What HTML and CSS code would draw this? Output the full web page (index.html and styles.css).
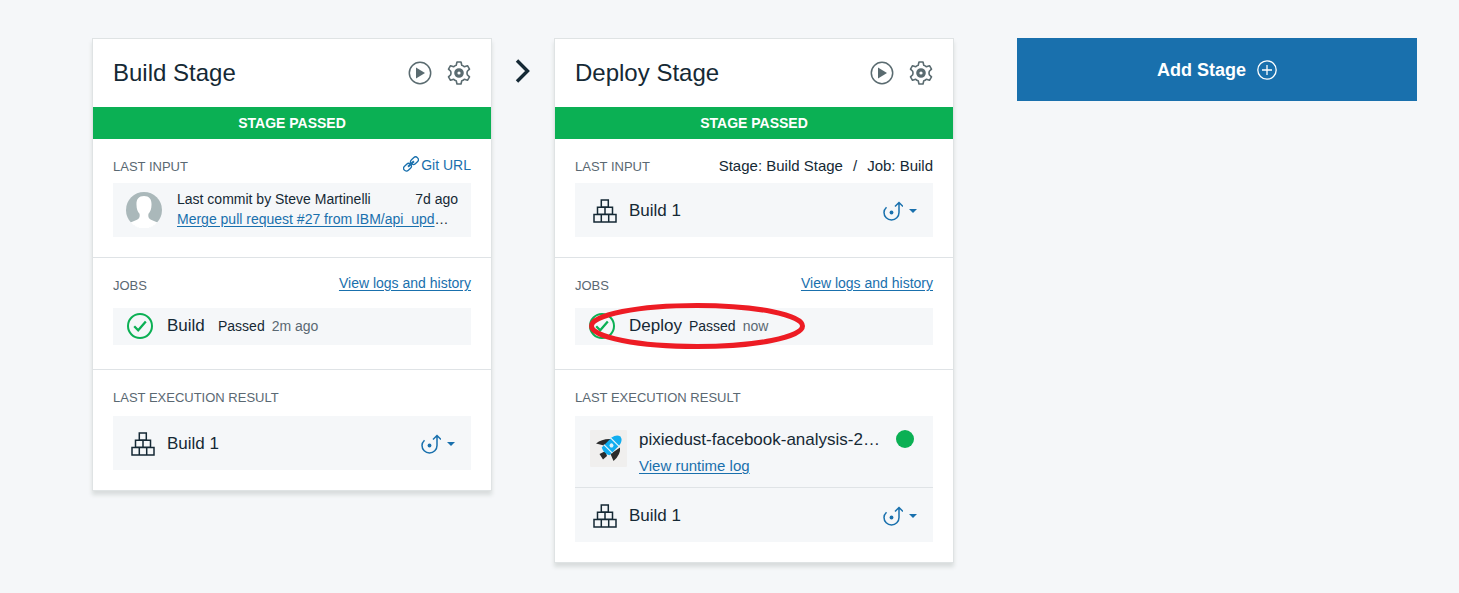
FILE: index.html
```html
<!DOCTYPE html>
<html lang="en">
<head>
<meta charset="utf-8">
<title>Delivery Pipeline</title>
<link rel="stylesheet" href="styles.css">
</head>
<body>
<svg class="sprite" aria-hidden="true">
  <symbol id="play" viewBox="0 0 24 24">
    <circle cx="12" cy="12" r="10.7" fill="none" stroke="currentColor" stroke-width="1.5"/>
    <path d="M8 6.5v11l9-5.5z" fill="currentColor"/>
  </symbol>
  <symbol id="gear" viewBox="0 0 24 24">
    <path d="M10 1h4l.8 3.200q1.500.3 2.500 1.600l3.200-1.100 2 3.400-2.200 2.200q-.6 1.700 0 3.400l2.200 2.200-2 3.400-3.200-1.100q-1 1.300-2.500 1.600L14 23h-4l-.8-3.200q-1.500-.3-2.500-1.600l-3.200 1.100-2-3.400 2.200-2.200q.6-1.700 0-3.400L1.500 8.100l2-3.400 3.200 1.100q1-1.300 2.500-1.600z" fill="none" stroke="currentColor" stroke-width="1.600" stroke-linejoin="round"/>
    <circle cx="12" cy="12" r="3.200" fill="none" stroke="currentColor" stroke-width="3.200"/>
  </symbol>
  <symbol id="blocks" viewBox="0 0 24 24">
    <path d="M8.300 1h7v7h-7zM4.500 8.300h7.500v7h-7.500zM12 8.300h7.500v7H12zM1 15.600h7.300V23H1zM8.300 15.600h7.400V23H8.300zM15.700 15.600H23V23h-7.300z" fill="none" stroke="currentColor" stroke-width="1.500"/>
  </symbol>
  <symbol id="redeploy" viewBox="0 0 20 20">
    <path d="M3.500 6.200C1.600 8 1 9.500 1 11.500a7.500 7.500 0 0 0 15 0V2M12 5.500l4-4 4 4" fill="none" stroke="currentColor" stroke-width="1.500"/>
    <circle cx="8.500" cy="11.500" r="1.900" fill="currentColor"/>
  </symbol>
  <symbol id="check" viewBox="0 0 26 26">
    <circle cx="13" cy="13" r="12" fill="none" stroke="currentColor" stroke-width="2"/>
    <path d="M7.200 13.200l4 4 7.600-8.700" fill="none" stroke="currentColor" stroke-width="2.300"/>
  </symbol>
  <symbol id="caret" viewBox="0 0 8 4"><path d="M0 0h8L4 4z" fill="currentColor"/></symbol>
</svg>

<main class="pipeline">
  <section class="stage">
    <header class="stage-header">
      <h2 class="stage-title">Build Stage</h2>
      <button class="icon-button" type="button" aria-label="Run stage"><svg class="icon-24"><use href="#play"/></svg></button>
      <button class="icon-button" type="button" aria-label="Configure stage"><svg class="icon-24"><use href="#gear"/></svg></button>
    </header>
    <p class="status">STAGE PASSED</p>
    <div class="section">
      <div class="section-head">
        <h3 class="label">LAST INPUT</h3>
        <a class="git-link" href="#git"><svg class="icon-link" viewBox="0 0 16 16"><g fill="none" stroke="currentColor" stroke-width="1.300" transform="rotate(-43 8 8)"><rect x="-1" y="5.200" width="8.500" height="5.600" rx="2.800"/><rect x="8.500" y="5.200" width="8.500" height="5.600" rx="2.800"/><path d="M4 8h8" stroke-width="2"/></g></svg>Git URL</a>
      </div>
      <div class="row commit">
        <svg class="avatar" viewBox="0 0 36 36"><circle cx="18" cy="18" r="18" fill="#aab8ba"/><path d="M18 4c-5.500 0-7.800 3.500-7.500 9 .1 4 1 6.500 3 8.700.6 3.300-.2 5-2.500 6L4.500 30.500A18 18 0 0 0 31.500 30.500L25 27.700c-2.300-1-3.100-2.700-2.500-6 2-2.200 2.900-4.700 3-8.700C25.800 7.500 23.500 4 18 4z" fill="#fff"/></svg>
        <div class="commit-text">
          <div class="commit-line"><span>Last commit by Steve Martinelli</span><span>7d ago</span></div>
          <div class="clip"><a class="link" href="#commit">Merge pull request #27 from IBM/api_upd</a>…</div>
        </div>
      </div>
    </div>
    <div class="section jobs">
      <div class="section-head">
        <h3 class="label">JOBS</h3>
        <a class="link logs" href="#logs">View logs and history</a>
      </div>
      <div class="row job">
        <svg class="icon-check"><use href="#check"/></svg>
        <div class="job-text"><span class="job-name">Build</span><span>Passed</span><span class="muted">2m ago</span></div>
      </div>
    </div>
    <div class="section result">
      <div class="section-head"><h3 class="label">LAST EXECUTION RESULT</h3></div>
      <div class="row build">
        <svg class="icon-24"><use href="#blocks"/></svg><span class="name">Build 1</span>
        <button class="menu-button" type="button" aria-label="Send to next stage"><svg class="icon-20"><use href="#redeploy"/></svg><svg class="caret"><use href="#caret"/></svg></button>
      </div>
    </div>
  </section>

  <svg class="arrow" viewBox="0 0 16 24" aria-hidden="true"><path d="M2 1.500L12.500 12 2 22.500" fill="none" stroke="currentColor" stroke-width="3.400"/></svg>

  <section class="stage">
    <header class="stage-header">
      <h2 class="stage-title">Deploy Stage</h2>
      <button class="icon-button" type="button" aria-label="Run stage"><svg class="icon-24"><use href="#play"/></svg></button>
      <button class="icon-button" type="button" aria-label="Configure stage"><svg class="icon-24"><use href="#gear"/></svg></button>
    </header>
    <p class="status">STAGE PASSED</p>
    <div class="section">
      <div class="section-head">
        <h3 class="label">LAST INPUT</h3>
        <div class="source"><span>Stage: Build Stage</span><span>/</span><span>Job: Build</span></div>
      </div>
      <div class="row build">
        <svg class="icon-24"><use href="#blocks"/></svg><span class="name">Build 1</span>
        <button class="menu-button" type="button" aria-label="Send to next stage"><svg class="icon-20"><use href="#redeploy"/></svg><svg class="caret"><use href="#caret"/></svg></button>
      </div>
    </div>
    <div class="section jobs">
      <div class="section-head">
        <h3 class="label">JOBS</h3>
        <a class="link logs" href="#logs">View logs and history</a>
      </div>
      <div class="row job">
        <svg class="icon-check"><use href="#check"/></svg>
        <div class="job-text"><span class="job-name">Deploy</span><span>Passed</span><span class="muted">now</span></div>
        <svg class="highlight" viewBox="0 0 216 46" aria-hidden="true"><ellipse cx="108" cy="23" rx="105.500" ry="20.500" fill="none" stroke="#ed1c24" stroke-width="5"/></svg>
      </div>
    </div>
    <div class="section result">
      <div class="section-head"><h3 class="label">LAST EXECUTION RESULT</h3></div>
      <div class="row app">
        <svg class="app-icon" viewBox="0 0 37 37">
          <rect width="37" height="37" rx="1" fill="#f0efee"/>
          <path d="M6 13.500q6-5 15-4.500l-5 7zM9.500 24l6-3 1.500 5-4 3.500zM30 17.500q1 7-6.500 13.500L20.500 24z" fill="#2b2b2b"/>
          <g transform="rotate(-45 22 15)"><path d="M13 9.500h14q6 1 7 5.500-1 4.500-7 5.500H13q-3-5.500 0-11z" fill="#10adef"/><path d="M16.500 9v12M26 9v12" stroke="#e9f6fb" stroke-width="1.200"/><circle cx="21.300" cy="15" r="2" fill="#d9f1fb"/></g>
        </svg>
        <div class="app-text"><span class="name">pixiedust-facebook-analysis-2…</span><a class="link runtime" href="#runtime">View runtime log</a></div>
        <span class="dot" role="img" aria-label="Running"></span>
      </div>
      <div class="row build">
        <svg class="icon-24"><use href="#blocks"/></svg><span class="name">Build 1</span>
        <button class="menu-button" type="button" aria-label="Send to next stage"><svg class="icon-20"><use href="#redeploy"/></svg><svg class="caret"><use href="#caret"/></svg></button>
      </div>
    </div>
  </section>

  <button class="add-stage" type="button">Add Stage<svg class="icon-20" viewBox="0 0 20 20"><circle cx="10" cy="10" r="9.200" fill="none" stroke="currentColor" stroke-width="1.300"/><path d="M10 5v10M5 10h10" stroke="currentColor" stroke-width="1.300"/></svg></button>
</main>
</body>
</html>
```
FILE: styles.css
```css
* { box-sizing: border-box; }

body {
  margin: 0;
  background: #f5f7f9;
  color: #152935;
  font: 14px/20px "Liberation Sans", Arial, sans-serif;
}

h2, h3, p { margin: 0; font-weight: 400; }
svg { display: block; flex: none; }
button { border: 0; padding: 0; background: none; font: inherit; color: inherit; cursor: pointer; }
.sprite { position: absolute; width: 0; height: 0; }

.pipeline {
  display: grid;
  grid-template-columns: minmax(0, 1fr) 62px minmax(0, 1fr) 63px minmax(0, 1fr);
  align-items: start;
  padding: 38px 42px 24px 92px;
}

.stage {
  background: #fff;
  border: 1px solid #dfe3e4;
  box-shadow: 0 4px 4px #d9dddd;
}
.stage-header { display: flex; align-items: center; gap: 15px; height: 68px; padding: 0 20px; }
.stage-title { flex: 1; font-size: 24px; line-height: 32px; }
.icon-button { color: #5a6b70; }
.icon-24 { width: 24px; height: 24px; }
.icon-20 { width: 20px; height: 20px; }

.status {
  background: #0bb054;
  color: #fff;
  font-weight: 700;
  line-height: 32px;
  text-align: center;
}

.section { padding: 17px 20px 20px; }
.section + .section { border-top: 1px solid #dfe3e6; }
.section-head { display: flex; justify-content: space-between; height: 22px; margin-bottom: 5px; }
.jobs { padding-bottom: 24px; }
.jobs .section-head { margin-bottom: 11px; }
.result .section-head { margin-bottom: 7px; }
.label { font-size: 13px; line-height: 22px; color: #5a6872; }

.link { color: #1970ad; text-decoration: underline; text-underline-offset: 2px; }
.logs { line-height: 16px; }
.git-link { display: flex; gap: 2px; line-height: 18px; color: #1970ad; text-decoration: none; }
.icon-link { width: 16px; height: 16px; }
.source { display: flex; gap: 10px; font-size: 15px; }

.row { display: flex; align-items: center; background: #f5f7f9; }
.commit { height: 54px; gap: 15px; padding: 0 13px; }
.avatar { width: 36px; height: 36px; }
.commit-text { flex: 1; min-width: 0; padding-bottom: 2px; }
.commit-line { display: flex; justify-content: space-between; }
.clip { overflow: hidden; white-space: nowrap; }

.job { position: relative; height: 37px; gap: 14px; padding: 0 14px 2px; }
.icon-check { width: 26px; height: 26px; color: #0bb054; }
.job-text { display: flex; align-items: baseline; gap: 7px; }
.job-name { min-width: 44px; font-size: 17px; }
.muted { color: #5a6872; }
.highlight { position: absolute; left: 14px; top: -5px; width: 216px; height: 46px; }

.build { height: 54px; gap: 12px; padding: 2px 16px 0 18px; }
.row + .row { border-top: 1px solid #dfe3e6; height: 55px; }
.name { font-size: 17px; }
.menu-button { display: flex; align-items: center; gap: 6px; margin-left: auto; color: #1970ad; }
.caret { width: 8px; height: 4px; }

.app { align-items: flex-start; height: 71px; gap: 12px; padding: 14px 19px 0 15px; }
.app-icon { width: 37px; height: 37px; }
.app-text { display: flex; flex: 1; flex-direction: column; align-items: flex-start; gap: 6px; min-width: 0; white-space: nowrap; }
.runtime { font-size: 15px; }
.dot { width: 18px; height: 18px; border-radius: 50%; background: #0bb054; }

.arrow { justify-self: center; width: 16px; height: 24px; margin-top: 21px; }

.add-stage {
  grid-column: 5;
  display: flex;
  align-items: center;
  justify-content: center;
  gap: 11px;
  height: 63px;
  background: #1970ad;
  color: #fff;
  font-size: 18px;
  font-weight: 700;
}
```
